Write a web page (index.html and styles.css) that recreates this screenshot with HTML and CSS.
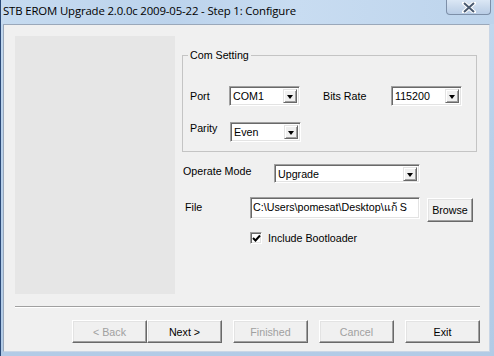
FILE: index.html
```html
<!DOCTYPE html>
<html lang="en">
<head>
    <meta charset="UTF-8">
    <title>STB EROM Upgrade</title>
    <link rel="stylesheet" href="styles.css">
</head>
<body>
    <div class="window">
        <div class="titlebar">
            <span class="title">STB EROM Upgrade 2.0.0c 2009-05-22 - Step 1: Configure</span>
            <div class="close-btn">
                <svg width="14" height="11" viewBox="0 0 14 11">
                    <path d="M2 1 L12 10 M12 1 L2 10" stroke="#fff" stroke-width="4" stroke-linecap="square"/>
                    <path d="M2 1 L12 10 M12 1 L2 10" stroke="#4a5a70" stroke-width="2"/>
                </svg>
            </div>
        </div>

        <div class="client">
            <div class="main">
                <div class="side-panel"></div>

                <div class="settings">
                    <div class="group">
                        <div class="group-title">Com Setting</div>
                        <div class="group-row first">
                            <span class="lbl lbl-port">Port</span>
                            <div class="combo combo-small"><span class="combo-text">COM1</span><span class="drop"></span></div>
                            <span class="lbl lbl-rate">Bits Rate</span>
                            <div class="combo combo-small"><span class="combo-text">115200</span><span class="drop"></span></div>
                        </div>
                        <div class="group-row second">
                            <span class="lbl lbl-port lbl-top">Parity</span>
                            <div class="combo combo-small combo-parity"><span class="combo-text">Even</span><span class="drop"></span></div>
                        </div>
                    </div>

                    <div class="form-row mode-row">
                        <span class="lbl lbl-mode">Operate Mode</span>
                        <div class="combo combo-mode"><span class="combo-text">Upgrade</span><span class="drop"></span></div>
                    </div>

                    <div class="form-row file-row">
                        <span class="lbl lbl-file">File</span>
                        <div class="textbox">C:\Users\pomesat\Desktop\แก้ S</div>
                        <div class="btn btn-browse">Browse</div>
                    </div>

                    <div class="form-row check-row">
                        <span class="checkbox">
                            <svg width="9" height="9" viewBox="0 0 9 9"><path d="M1 4 L3.5 6.5 L8 1.5" fill="none" stroke="#000" stroke-width="2"/></svg>
                        </span>
                        <span class="check-label">Include Bootloader</span>
                    </div>
                </div>
            </div>

            <div class="separator"></div>

            <div class="buttons">
                <div class="btn btn-nav disabled">&lt; Back</div>
                <div class="btn btn-nav">Next &gt;</div>
                <div class="btn btn-nav disabled gap">Finished</div>
                <div class="btn btn-nav disabled gap">Cancel</div>
                <div class="btn btn-nav gap">Exit</div>
            </div>
        </div>
    </div>
</body>
</html>
```

FILE: styles.css
```css
body {
    margin: 0;
    width: 494px;
    height: 356px;
    overflow: hidden;
    font-family: 'Liberation Sans', Arial, sans-serif;
    font-size: 10.7px;
    color: #000;
}
.window {
    height: 356px;
    background: linear-gradient(180deg, #c3d9ef 0%, #b8d0ea 40%, #b2cbe6 100%);
    border-left: 1px solid #2b4a78;
    box-sizing: border-box;
    display: flex;
    flex-direction: column;
}
.titlebar {
    height: 24px;
    display: flex;
    align-items: flex-start;
    justify-content: space-between;
    background: linear-gradient(90deg, #c6dbf0 0%, #bcd3ec 35%, #c8dcf1 60%, #bdd4ec 100%);
}
.title {
    font-family: 'Open Sans', 'Noto Sans', sans-serif;
    font-size: 11.4px;
    letter-spacing: -0.15px;
    margin: 3px 0 0 2px;
    color: #000;
}
.close-btn {
    width: 45px;
    height: 15px;
    margin-right: 3px;
    border: 1px solid #7d8fa8;
    border-top: none;
    border-radius: 0 0 4px 4px;
    background: linear-gradient(180deg, #dbe7f5 0%, #c9d9ec 50%, #b9cde6 100%);
    display: flex;
    align-items: center;
    justify-content: center;
    box-sizing: border-box;
}
.client {
    margin: 0 4px 4px 2px;
    height: 328px;
    background: #f0f0f0;
    border-top: 1px solid #9aa8ba;
    border-left: 1px solid #9aa8ba;
    border-right: 1px solid #c9d6e6;
    border-bottom: 1px solid #c9d6e6;
    box-sizing: border-box;
    padding: 11px 9px 0 11px;
}
.main {
    display: flex;
    height: 258px;
}
.side-panel {
    width: 160px;
    height: 258px;
    background: #e6e6e6;
}
.settings {
    margin-left: 7px;
    flex: 1;
}
.group {
    margin-top: 19px;
    width: 295px;
    height: 97px;
    border: 1px solid #c4c4c4;
    box-sizing: border-box;
    padding-left: 7px;
}
.group-title {
    width: max-content;
    height: 13px;
    line-height: 13px;
    margin: -7px 0 0 -2px;
    padding: 0 2px;
    background: #f0f0f0;
}
.group-row {
    display: flex;
    align-items: center;
    height: 20px;
}
.group-row.first {
    margin-top: 24px;
}
.group-row.second {
    margin-top: 16px;
    align-items: flex-start;
}
.lbl {
    line-height: 13px;
}
.lbl-port {
    width: 39px;
}
.lbl-rate {
    width: 68px;
    margin-left: 23px;
}
.lbl-top {
    margin-top: 0;
}
.combo {
    display: flex;
    align-items: stretch;
    background: #fff;
    border-top: 1px solid #a0a0a0;
    border-left: 1px solid #a0a0a0;
    border-right: 1px solid #ffffff;
    border-bottom: 1px solid #ffffff;
    box-shadow: inset 1px 1px 0 #696969, inset -1px -1px 0 #e3e3e3;
    box-sizing: border-box;
    padding: 2px;
}
.combo-small {
    width: 71px;
    height: 20px;
}
.combo-parity {
    margin-left: 1px;
}
.combo-text {
    flex: 1;
    line-height: 14px;
    padding-left: 1px;
}
.drop {
    width: 12px;
    background: #f0f0f0;
    border-top: 1px solid #e3e3e3;
    border-left: 1px solid #e3e3e3;
    border-right: 1px solid #696969;
    border-bottom: 1px solid #696969;
    box-shadow: inset 1px 1px 0 #fff, inset -1px -1px 0 #a0a0a0;
    display: flex;
    align-items: center;
    justify-content: center;
}
.drop::after {
    content: "";
    border-left: 3.5px solid transparent;
    border-right: 3.5px solid transparent;
    border-top: 4px solid #000;
    margin-top: 1px;
}
.form-row {
    display: flex;
}
.mode-row {
    margin-top: 12px;
    align-items: flex-start;
}
.lbl-mode {
    width: 91px;
    margin-left: 1px;
    margin-top: 1px;
}
.combo-mode {
    width: 146px;
    height: 19px;
    padding: 2px 2px 1px 2px;
}
.file-row {
    margin-top: 14px;
    align-items: flex-start;
}
.lbl-file {
    width: 65px;
    margin-left: 3px;
    margin-top: 4px;
}
.textbox {
    width: 170px;
    height: 22px;
    line-height: 18px;
    padding-left: 2px;
    background: #fff;
    border-top: 1px solid #a0a0a0;
    border-left: 1px solid #a0a0a0;
    border-right: 1px solid #ffffff;
    border-bottom: 1px solid #ffffff;
    box-shadow: inset 1px 1px 0 #696969, inset -1px -1px 0 #e3e3e3;
    box-sizing: border-box;
    white-space: nowrap;
    overflow: hidden;
    font-family: 'Liberation Sans', 'Noto Sans', 'DejaVu Sans', sans-serif;
}
.btn {
    background: #f0f0f0;
    border-top: 1px solid #fff;
    border-left: 1px solid #fff;
    border-right: 1px solid #696969;
    border-bottom: 1px solid #696969;
    box-shadow: inset -1px -1px 0 #a0a0a0, inset 1px 1px 0 #e3e3e3;
    box-sizing: border-box;
    display: flex;
    align-items: center;
    justify-content: center;
}
.btn-browse {
    width: 46px;
    height: 24px;
    margin-left: 7px;
    margin-top: 1px;
}
.check-row {
    margin-top: 10px;
    margin-left: 68px;
    align-items: center;
}
.checkbox {
    width: 12px;
    height: 12px;
    background: #fff;
    border-top: 1px solid #a0a0a0;
    border-left: 1px solid #a0a0a0;
    border-right: 1px solid #fff;
    border-bottom: 1px solid #fff;
    box-shadow: inset 1px 1px 0 #696969, inset -1px -1px 0 #e3e3e3;
    box-sizing: border-box;
    display: flex;
    align-items: center;
    justify-content: center;
}
.check-label {
    margin-left: 6px;
}
.separator {
    margin-top: 12px;
    height: 1px;
    border-top: 1px solid #a0a0a0;
    border-bottom: 1px solid #fff;
    box-sizing: content-box;
    height: 0;
}
.buttons {
    margin-top: 12px;
    display: flex;
    justify-content: flex-end;
}
.btn-nav {
    width: 75px;
    height: 23px;
}
.btn-nav.gap {
    margin-left: 11px;
}
.disabled {
    color: #a0a0a0;
}
```
